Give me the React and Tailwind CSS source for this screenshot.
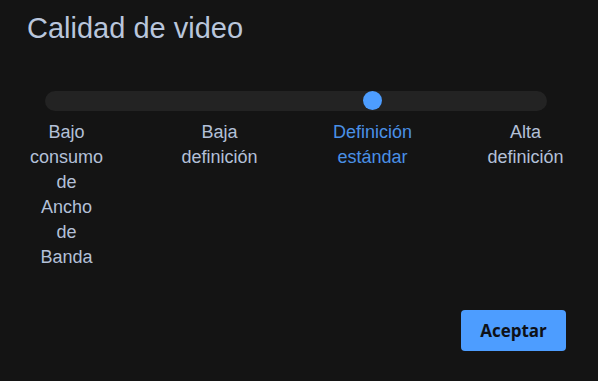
import React, { useState } from "react";

const levels = [
  "Bajo consumo de Ancho de Banda",
  "Baja definición",
  "Definición estándar",
  "Alta definición",
];

const VideoQuality = () => {
  const [level, setLevel] = useState(2);

  // track inset so stops line up under the labels
  const thumbLeft = 21.5 + (level / (levels.length - 1)) * 459 - 9.5;

  return (
    <div
      className="w-[598px] h-[381px] bg-[#141414] flex flex-col pt-[10px]"
      style={{ fontFamily: '"Liberation Sans", Arial, sans-serif' }}
    >
      {/* Title */}
      <h1 className="pl-[27px] text-[29px] leading-[36px] text-[#b9c6dc]">
        Calidad de video
      </h1>

      {/* Slider */}
      <div className="ml-[45px] w-[502px] mt-[45px]">
        <div className="relative h-[20px] rounded-full bg-[#232323]">
          <div
            className="absolute top-[0px] w-[19px] h-[19px] rounded-full bg-[#4d9dff]"
            style={{ left: thumbLeft }}
          />
        </div>

        <div className="flex justify-between mt-[9px]">
          {levels.map((label, i) => (
            <button
              key={label}
              onClick={() => setLevel(i)}
              className="w-[43px] flex justify-center"
            >
              <span
                className={`w-min shrink-0 text-center text-[18px] leading-[25px] ${
                  i === level ? "text-[#4a90e6]" : "text-[#b3c0d8]"
                }`}
              >
                {label}
              </span>
            </button>
          ))}
        </div>
      </div>

      {/* Footer */}
      <div className="flex justify-end pr-[32px] mt-[40px]">
        <button
          className="w-[105px] h-[41px] rounded bg-[#4d9dff] text-[#0e1117] text-[17px] font-bold"
          style={{ fontFamily: '"Open Sans", "Noto Sans", sans-serif' }}
        >
          Aceptar
        </button>
      </div>
    </div>
  );
};

export default function App() {
  return <VideoQuality />;
}
